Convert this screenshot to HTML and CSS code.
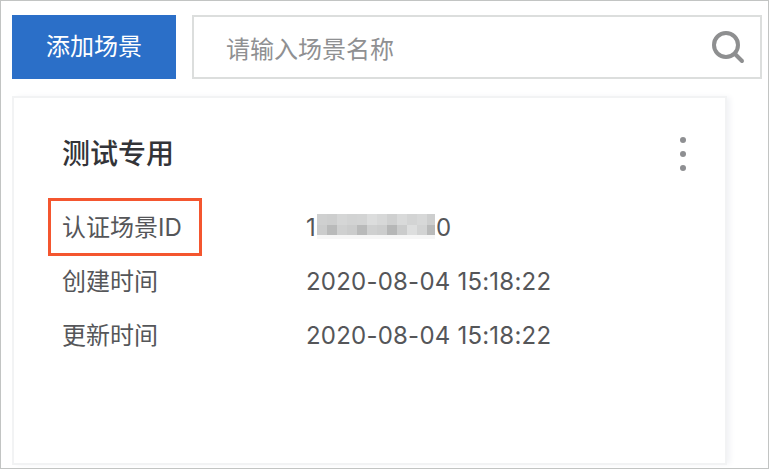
FILE: index.html

```html
<!DOCTYPE html>
<html>
    <head>
        <meta charset="utf-8">
        <title>场景</title>

        <link rel="stylesheet" href="styles.css">
    </head>
    <body>

        <div class="frame">
            <div class="toolbar">
                <button class="add-button">添加场景</button>

                <div class="search">
                    <span class="search-text">请输入场景名称</span>
                    <svg class="search-icon" width="36" height="36" viewBox="0 0 36 36">
                        <circle cx="16" cy="16" r="12" fill="none" stroke="#8e8f90" stroke-width="4"/>
                        <path d="M25.5 25.5 L32 32" fill="none" stroke="#8e8f90" stroke-width="4" stroke-linecap="round"/>
                    </svg>
                </div>
            </div>

            <div class="card">
                <div class="card-head">
                    <h2 class="card-title">测试专用</h2>
                    <div class="more">
                        <i></i>
                        <i></i>
                        <i></i>
                    </div>
                </div>

                <div class="row">
                    <span class="row-label row-label-marked">认证场景ID</span>
                    <span class="row-value">1<svg class="mosaic" width="118" height="25" viewBox="0 0 118 25" shape-rendering="crispEdges">
                        <rect x="0" width="10" height="11" fill="#cfd0d0"/>
                        <rect x="10" width="10" height="11" fill="#cdcece"/>
                        <rect x="20" width="10" height="11" fill="#d5d6d6"/>
                        <rect x="30" width="10" height="11" fill="#d2d3d3"/>
                        <rect x="40" width="10" height="11" fill="#d3d4d4"/>
                        <rect x="50" width="10" height="11" fill="#dcdddd"/>
                        <rect x="60" width="10" height="11" fill="#d7d8d8"/>
                        <rect x="70" width="10" height="11" fill="#cfd0d0"/>
                        <rect x="80" width="10" height="11" fill="#d9dada"/>
                        <rect x="90" width="10" height="11" fill="#d3d4d4"/>
                        <rect x="100" width="10" height="11" fill="#d7d8d8"/>
                        <rect x="110" width="8" height="11" fill="#cdcece"/>
                        <rect x="0" y="11" width="10" height="10" fill="#cbcccc"/>
                        <rect x="10" y="11" width="10" height="10" fill="#b9baba"/>
                        <rect x="20" y="11" width="10" height="10" fill="#cfd0d0"/>
                        <rect x="30" y="11" width="10" height="10" fill="#cbcccc"/>
                        <rect x="40" y="11" width="10" height="10" fill="#b9baba"/>
                        <rect x="50" y="11" width="10" height="10" fill="#cfd0d0"/>
                        <rect x="60" y="11" width="10" height="10" fill="#cccdcd"/>
                        <rect x="70" y="11" width="10" height="10" fill="#b6b7b7"/>
                        <rect x="80" y="11" width="10" height="10" fill="#cbcccc"/>
                        <rect x="90" y="11" width="10" height="10" fill="#dddede"/>
                        <rect x="100" y="11" width="10" height="10" fill="#d2d3d3"/>
                        <rect x="110" y="11" width="8" height="10" fill="#b9baba"/>
                        <rect y="21" width="118" height="4" fill="#f6f6f6"/>
                    </svg>0</span>
                </div>
                <div class="row">
                    <span class="row-label">创建时间</span>
                    <span class="row-value">2020-08-04 15:18:22</span>
                </div>
                <div class="row">
                    <span class="row-label">更新时间</span>
                    <span class="row-value">2020-08-04 15:18:22</span>
                </div>
            </div>
        </div>

    </body>
</html>
```

FILE: styles.css

```css
html, body {
    margin: 0;
    padding: 0;
    background: #fff;
}

body {
    font-family: Inter, "Noto Sans CJK SC", sans-serif;
    font-size: 24px;
    color: #555659;
}

.frame {
    box-sizing: border-box;
    width: 769px;
    height: 469px;
    padding: 14px 6px 3px 11px;
    border: 1px solid #c2c4c3;
    overflow: hidden;
}

/* Toolbar */

.toolbar {
    display: flex;
    gap: 16px;
    height: 64px;
}

.add-button {
    width: 164px;
    border: none;
    padding: 0 0 5px;
    background: #2b6fc8;
    color: #fff;
    font: inherit;
}

.search {
    flex: 1;
    display: flex;
    align-items: center;
    justify-content: space-between;
    padding: 0 14px 0 32px;
    border: 2px solid #dcdedd;
}

.search-text {
    color: #8f9092;
}

.search-icon {
    display: block;
}

/* Card */

.card {
    box-sizing: border-box;
    width: 715px;
    height: 369px;
    margin-top: 17px;
    padding: 36px 0 0 48px;
    border: 2px solid #f2f3f4;
    box-shadow: 4px 0 6px -1px #f1f2f5;
}

.card-head {
    display: flex;
    justify-content: space-between;
    align-items: center;
    padding-right: 39px;
    margin-bottom: 24px;
}

.card-title {
    margin: 0;
    font-size: 28px;
    font-weight: 500;
    line-height: 40px;
    color: #333438;
}

.more {
    display: flex;
    flex-direction: column;
    gap: 8px;
}

.more i {
    display: block;
    width: 6px;
    height: 6px;
    border-radius: 50%;
    background: #8e8f92;
}

.row {
    display: flex;
    align-items: center;
    height: 54px;
}

.row-label {
    position: relative;
    width: 244px;
}

/* red box is drawn over the screenshot, so it doesn't push the text */
.row-label-marked::after {
    content: "";
    position: absolute;
    left: -14px;
    top: -10px;
    width: 148px;
    height: 52px;
    border: 3px solid #f4562f;
}

.row-value {
    display: flex;
    align-items: center;
    padding-top: 4px;
    letter-spacing: 0.22px;
}

.mosaic {
    display: block;
    margin: -2px 1px 0;
}
```
